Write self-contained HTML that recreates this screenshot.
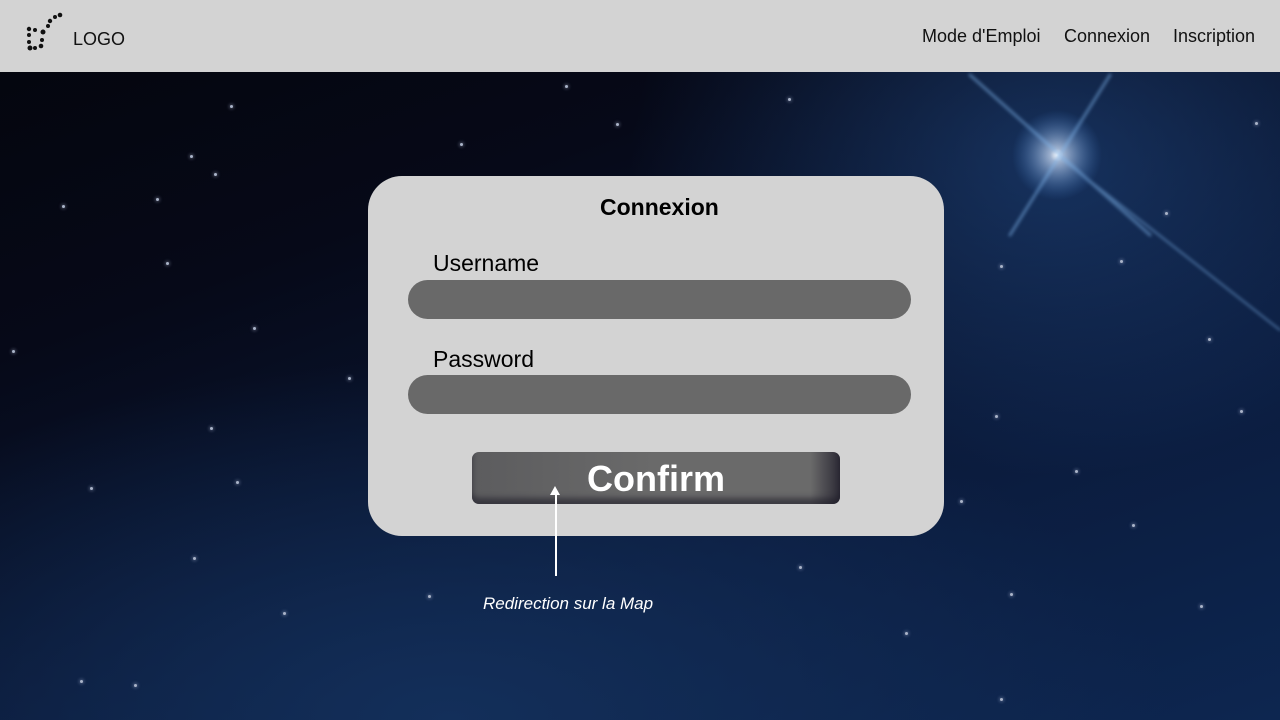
<!DOCTYPE html>
<html><head><meta charset="utf-8"><style>
*{margin:0;padding:0;box-sizing:border-box}
body{width:1280px;height:720px;overflow:hidden;font-family:"Liberation Sans",sans-serif;position:relative;
background:radial-gradient(ellipse 600px 450px at 1050px 160px,rgba(40,90,160,.45),rgba(0,0,0,0) 70%),
radial-gradient(ellipse 900px 450px at 450px 720px,#132f5a,rgba(0,0,0,0) 80%),
linear-gradient(160deg,#04050c 0%,#060918 30%,#0b1c3e 70%,#0d2650 100%);}
.hdr{position:absolute;left:0;top:0;width:1280px;height:72px;background:#d3d3d3}
.hdr .logo{position:absolute;left:73px;top:29px;font-size:18px;color:#111}
.nav{position:absolute;top:26px;font-size:18px;color:#111}
.card{position:absolute;left:368px;top:176px;width:576px;height:360px;background:#d3d3d3;border-radius:34px}
.t{position:absolute;font-size:23px;color:#000}
.in{position:absolute;left:40px;width:503px;height:39px;background:#696969;border-radius:20px}
.btn{position:absolute;left:104px;top:276px;width:368px;height:52px;border-radius:7px;
background:linear-gradient(90deg,#5c5c5e 0%,#6a6a6a 50%,#6a6a6a 92%,#2d2b36 100%);
box-shadow:inset 0 -6px 6px rgba(30,28,40,.6);color:#fff;font-weight:bold;font-size:36px;text-align:center;line-height:54px}
.s{position:absolute;width:3px;height:3px;border-radius:50%;background:#aab4c8;box-shadow:0 0 3px 1px rgba(200,210,240,.35)}
</style></head><body>
<svg style="position:absolute;left:0;top:0" width="1280" height="720">
<defs><radialGradient id="g"><stop offset="0" stop-color="#fff"/><stop offset=".15" stop-color="#d8e8ff" stop-opacity=".7"/><stop offset="1" stop-color="#4080d0" stop-opacity="0"/></radialGradient>
<filter id="b"><feGaussianBlur stdDeviation="1.5"/></filter></defs>
<circle cx="1057" cy="155" r="45" fill="url(#g)"/>
<g stroke="#7fb4ea" stroke-linecap="round" opacity=".5" filter="url(#b)">
<line x1="970" y1="75" x2="1150" y2="235" stroke-width="3"/>
<line x1="1057" y1="155" x2="1280" y2="330" stroke-width="2"/>
<line x1="1110" y1="75" x2="1010" y2="235" stroke-width="3"/>
</g></svg>
<div class="hdr">
<svg style="position:absolute;left:24px;top:12px" width="40" height="40">
<g fill="#111"><circle cx="36" cy="3" r="2.3"/><circle cx="31" cy="5" r="2"/><circle cx="26" cy="9" r="2.2"/><circle cx="24" cy="14" r="2"/><circle cx="19" cy="20" r="2.5"/><circle cx="11" cy="18" r="2"/><circle cx="5" cy="17" r="2.2"/><circle cx="5" cy="23" r="2"/><circle cx="5" cy="30" r="2"/><circle cx="6" cy="36" r="2.5"/><circle cx="11" cy="36" r="2"/><circle cx="17" cy="34" r="2.3"/><circle cx="18" cy="28" r="2"/></g></svg>
<div class="logo">LOGO</div>
<div class="nav" style="left:922px">Mode d'Emploi</div>
<div class="nav" style="left:1064px">Connexion</div>
<div class="nav" style="left:1173px">Inscription</div>
</div>
<div class="s" style="left:230px;top:105px"></div><div class="s" style="left:190px;top:155px"></div><div class="s" style="left:214px;top:173px"></div><div class="s" style="left:156px;top:198px"></div><div class="s" style="left:62px;top:205px"></div><div class="s" style="left:166px;top:262px"></div><div class="s" style="left:12px;top:350px"></div><div class="s" style="left:253px;top:327px"></div><div class="s" style="left:348px;top:377px"></div><div class="s" style="left:210px;top:427px"></div><div class="s" style="left:236px;top:481px"></div><div class="s" style="left:90px;top:487px"></div><div class="s" style="left:193px;top:557px"></div><div class="s" style="left:283px;top:612px"></div><div class="s" style="left:428px;top:595px"></div><div class="s" style="left:616px;top:123px"></div><div class="s" style="left:788px;top:98px"></div><div class="s" style="left:565px;top:85px"></div><div class="s" style="left:460px;top:143px"></div><div class="s" style="left:1000px;top:265px"></div><div class="s" style="left:1120px;top:260px"></div><div class="s" style="left:1208px;top:338px"></div><div class="s" style="left:995px;top:415px"></div><div class="s" style="left:1132px;top:524px"></div><div class="s" style="left:1010px;top:593px"></div><div class="s" style="left:905px;top:632px"></div><div class="s" style="left:799px;top:566px"></div><div class="s" style="left:1165px;top:212px"></div><div class="s" style="left:1255px;top:122px"></div><div class="s" style="left:960px;top:500px"></div><div class="s" style="left:1075px;top:470px"></div><div class="s" style="left:1000px;top:698px"></div><div class="s" style="left:134px;top:684px"></div><div class="s" style="left:80px;top:680px"></div><div class="s" style="left:1240px;top:410px"></div><div class="s" style="left:1200px;top:605px"></div>
<div class="card">
<div class="t" style="left:232px;top:18px;font-weight:bold">Connexion</div>
<div class="t" style="left:65px;top:74px">Username</div>
<div class="in" style="top:104px"></div>
<div class="t" style="left:65px;top:170px">Password</div>
<div class="in" style="top:199px"></div>
<div class="btn">Confirm</div>
</div>
<div style="position:absolute;left:555px;top:492px;width:1.5px;height:84px;background:#fff"></div>
<div style="position:absolute;left:550px;top:486px;width:0;height:0;border-left:5px solid transparent;border-right:5px solid transparent;border-bottom:9px solid #fff"></div>
<div style="position:absolute;left:483px;top:594px;color:#fff;font-style:italic;font-size:17px">Redirection sur la Map</div>
</body></html>
